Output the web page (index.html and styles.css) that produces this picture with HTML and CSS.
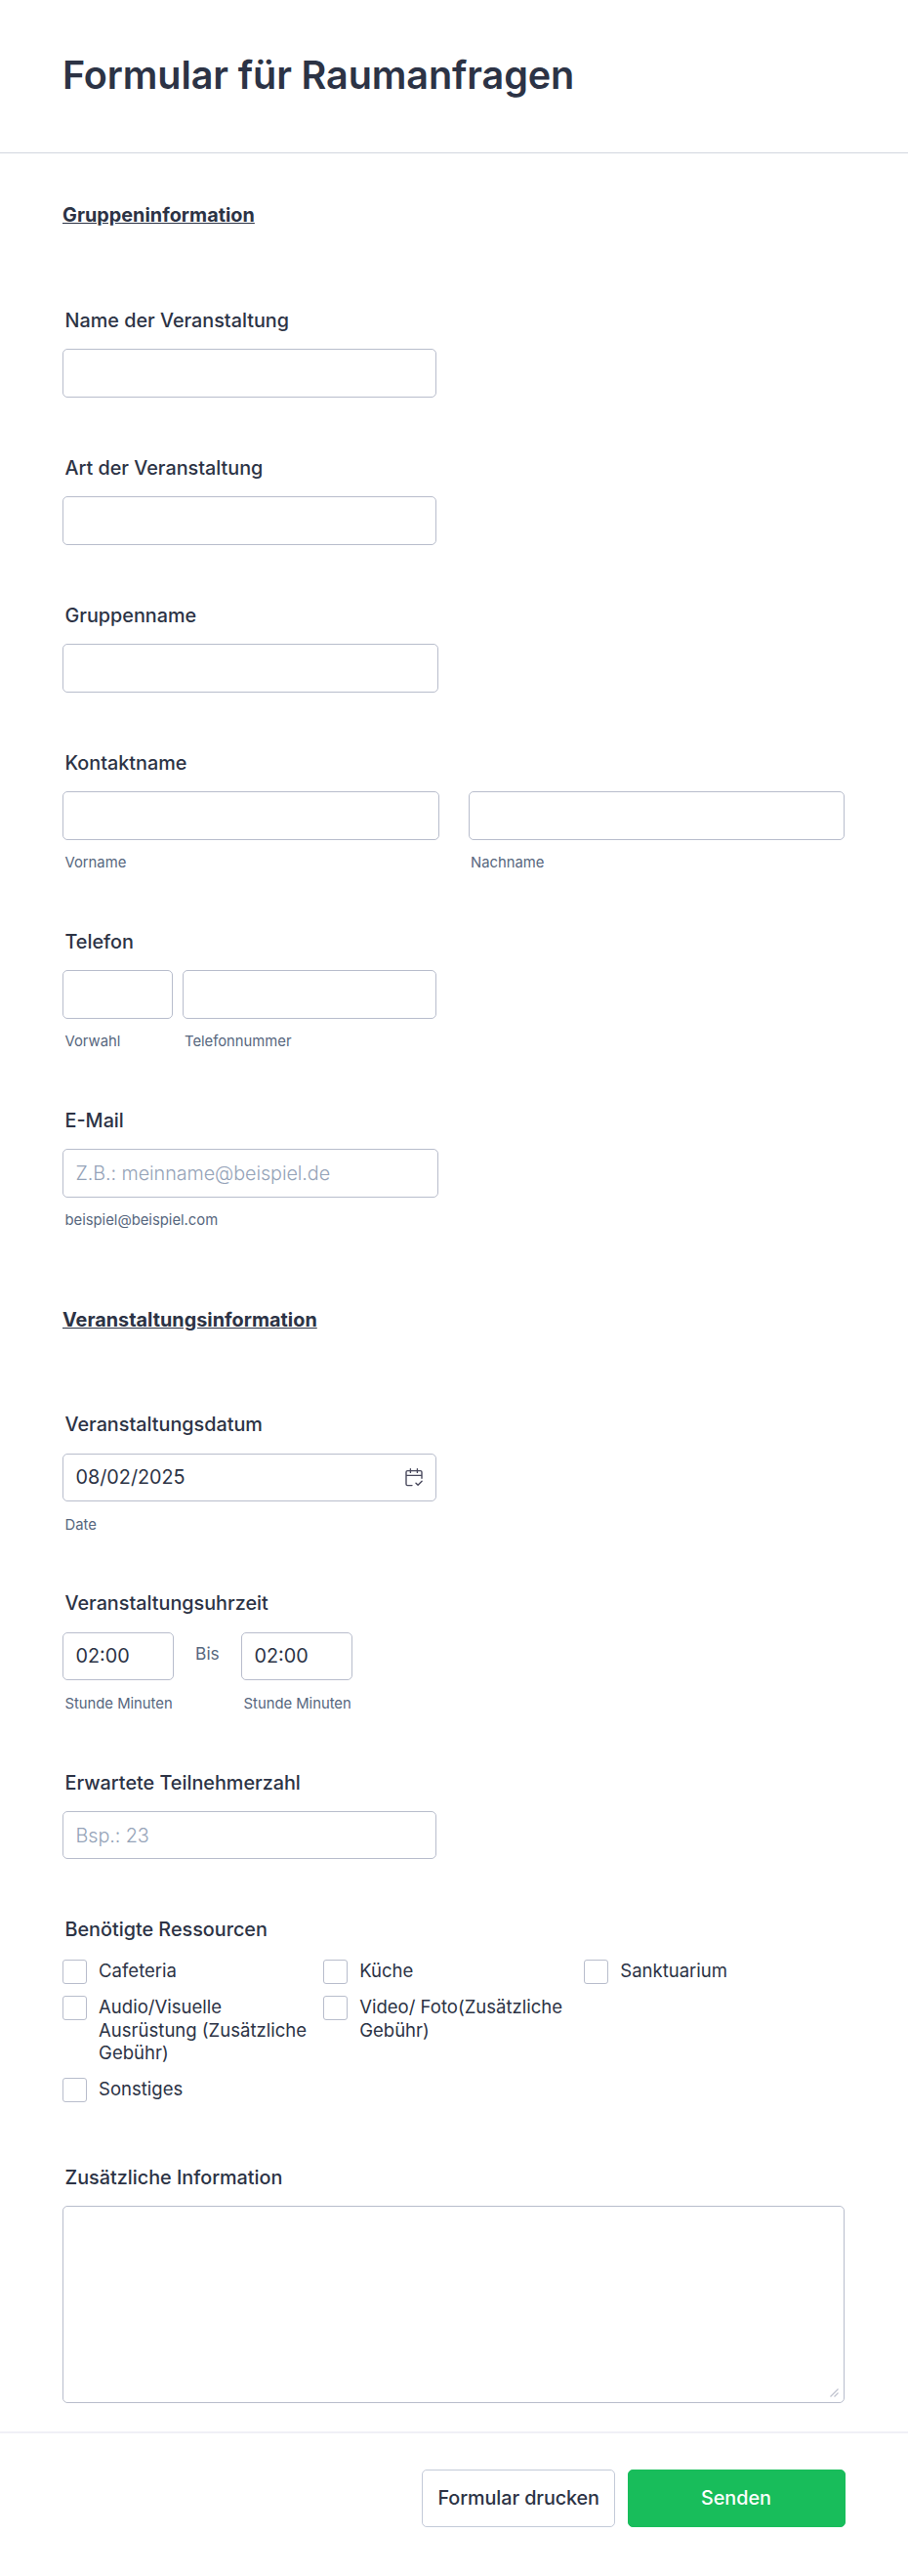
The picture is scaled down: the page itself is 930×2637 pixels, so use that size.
FILE: index.html
```html
<!DOCTYPE html>
<html lang="de">
<head>
<meta charset="utf-8">
<title>Formular für Raumanfragen</title>
<link rel="stylesheet" href="styles.css">
</head>
<body>
<form class="form">
  <header class="form-header"><h1 class="title">Formular für Raumanfragen</h1></header>
  <main class="fields">
    <h2 class="section">Gruppeninformation</h2>
    <div class="field"><label class="label">Name der Veranstaltung</label><div class="input"></div></div>
    <div class="field"><label class="label">Art der Veranstaltung</label><div class="input"></div></div>
    <div class="field"><label class="label">Gruppenname</label><div class="input input-wide"></div></div>
    <div class="field has-sub">
      <label class="label">Kontaktname</label>
      <div class="row row-name">
        <div class="part"><div class="input"></div><span class="sub">Vorname</span></div>
        <div class="part"><div class="input"></div><span class="sub">Nachname</span></div>
      </div>
    </div>
    <div class="field has-sub">
      <label class="label">Telefon</label>
      <div class="row row-phone">
        <div class="part"><div class="input"></div><span class="sub">Vorwahl</span></div>
        <div class="part"><div class="input"></div><span class="sub">Telefonnummer</span></div>
      </div>
    </div>
    <div class="field has-sub">
      <label class="label">E-Mail</label>
      <div class="part"><div class="input input-wide placeholder">Z.B.: meinname@beispiel.de</div><span class="sub">beispiel@beispiel.com</span></div>
    </div>
    <h2 class="section section-event">Veranstaltungsinformation</h2>
    <div class="field has-sub">
      <label class="label">Veranstaltungsdatum</label>
      <div class="part">
        <div class="input"><span>08/02/2025</span>
          <svg class="calendar" viewBox="0 0 18 19" fill="none" stroke="#4a4a5e" stroke-width="1.4" stroke-linecap="round" stroke-linejoin="round"><path d="M7 17.6H2.4A1.4 1.4 0 0 1 1 16.2V4a1.4 1.4 0 0 1 1.4-1.4h13.2A1.4 1.4 0 0 1 17 4v6.2M1 7.4h16M5.4.8v3.6M12.4.8v3.6M11 15.2l2.1 2.1 4-4"/></svg>
        </div>
        <span class="sub">Date</span>
      </div>
    </div>
    <div class="field has-sub">
      <label class="label">Veranstaltungsuhrzeit</label>
      <div class="row row-time">
        <div class="part"><div class="input">02:00</div><span class="sub">Stunde Minuten</span></div>
        <span class="until">Bis</span>
        <div class="part"><div class="input">02:00</div><span class="sub">Stunde Minuten</span></div>
      </div>
    </div>
    <div class="field"><label class="label">Erwartete Teilnehmerzahl</label><div class="input placeholder">Bsp.: 23</div></div>
    <div class="field-options">
      <label class="label">Benötigte Ressourcen</label>
      <div class="options">
        <div class="option"><i class="box"></i><span>Cafeteria</span></div>
        <div class="option"><i class="box"></i><span>Küche</span></div>
        <div class="option"><i class="box"></i><span>Sanktuarium</span></div>
        <div class="option"><i class="box"></i><span>Audio/Visuelle Ausrüstung (Zusätzliche Gebühr)</span></div>
        <div class="option"><i class="box"></i><span>Video/ Foto(Zusätzliche Gebühr)</span></div>
        <div class="option option-last"><i class="box"></i><span>Sonstiges</span></div>
      </div>
    </div>
    <div class="field-text">
      <label class="label">Zusätzliche Information</label>
      <div class="textarea"><svg class="grip" viewBox="0 0 9 9" fill="none" stroke="#bfc3ce" stroke-width="1.2"><path d="M.5 8.5l8-8M4.5 8.5l4-4"/></svg></div>
    </div>
  </main>
  <footer class="actions">
    <button type="button" class="button print">Formular drucken</button>
    <button type="button" class="button send">Senden</button>
  </footer>
</form>
</body>
</html>
```

FILE: styles.css
```css
* { box-sizing: border-box; }
body { margin: 0; background: #fff; }
.form {
  width: 930px;
  height: 2637px;
  font-family: Inter, "Liberation Sans", sans-serif;
  font-size: 19.79px;
  color: #2c3345;
}
.form-header {
  height: 156.5px;
  padding: 53px 64px 0;
  border-bottom: 1px solid #d2d6de;
}
.title { margin: 0; font-size: 39.57px; line-height: 49px; font-weight: 600; letter-spacing: -.11px; }
.fields { padding: 32px 64px 0; }
.section {
  height: 127.7px;
  margin: 0;
  padding-top: 19.5px;
  font-size: 19.79px;
  line-height: 25px;
  font-weight: 700;
  letter-spacing: .03px;
  text-decoration: underline;
}
.section-event { height: 128.2px; padding-top: 21.3px; }
.field { height: 150.9px; }
.has-sub { height: 183.1px; }
.label {
  display: block;
  padding-left: 2.5px;
  margin-bottom: 15.8px;
  line-height: 25.4px;
  font-weight: 500;
}
.input {
  display: flex;
  align-items: center;
  justify-content: space-between;
  width: 383.3px;
  height: 49.6px;
  padding: 0 13.4px 0 12.5px;
  border: 1px solid #b8bdcc;
  border-radius: 5px;
}
.input-wide { width: 384.6px; }
.placeholder { color: #95a3b8; font-weight: 300; letter-spacing: -.08px; }
.row { display: flex; }
.row-name { width: 801.3px; gap: 29.7px; }
.row-name .part { flex: 1; }
.row-name .input { width: 100%; }
.row-phone { width: 383.3px; gap: 10px; }
.row-phone .part { width: 112.5px; }
.row-phone .part + .part { width: auto; flex: 1; }
.row-phone .input { width: 100%; }
.row-time .input { width: 113.7px; }
.row-time .part { width: 113.7px; }
.sub {
  display: block;
  margin-top: 14.4px;
  padding-left: 2.5px;
  font-size: 14.84px;
  line-height: 19px;
  letter-spacing: -.02px;
  color: #57677e;
  white-space: nowrap;
}
.until {
  width: 69.4px;
  text-align: center;
  padding-top: 11.8px;
  font-size: 17.31px;
  line-height: 22px;
  color: #57677e;
}
.calendar { width: 18px; height: 19px; }
.field-options { height: 253.6px; }
.field-options .label { margin-bottom: 17.2px; }
.options {
  display: grid;
  grid-template-columns: repeat(3, 267.1px);
  row-gap: 12.4px;
  font-size: 18.55px;
  line-height: 23.6px;
}
.option {
  display: grid;
  grid-template-columns: 24.7px 218px;
  gap: 12.4px;
  align-items: start;
}
.option-last { grid-column: 1; padding-top: 1px; }
.box { height: 24.7px; border: 1px solid #b8bdcc; border-radius: 3px; }
.textarea {
  display: flex;
  align-items: flex-end;
  justify-content: flex-end;
  width: 801.3px;
  height: 201.5px;
  padding: 5px;
  border: 1px solid #b8bdcc;
  border-radius: 5px;
}
.grip { width: 9px; height: 9px; }
.actions {
  display: flex;
  justify-content: flex-end;
  gap: 12.4px;
  margin-top: 29.2px;
  padding: 36.8px 64.5px 0;
  border-top: 2px solid #f0f0f6;
}
.button {
  height: 59.4px;
  border: 1px solid #c3cad8;
  border-radius: 5px;
  background: #fff;
  color: #2c3345;
  font: 500 19.79px Inter, "Liberation Sans", sans-serif;
  padding: 0;
}
.print { width: 197.8px; letter-spacing: -.08px; }
.send { width: 223px; background: #18bd5b; border-color: #18bd5b; color: #fff; }
```
